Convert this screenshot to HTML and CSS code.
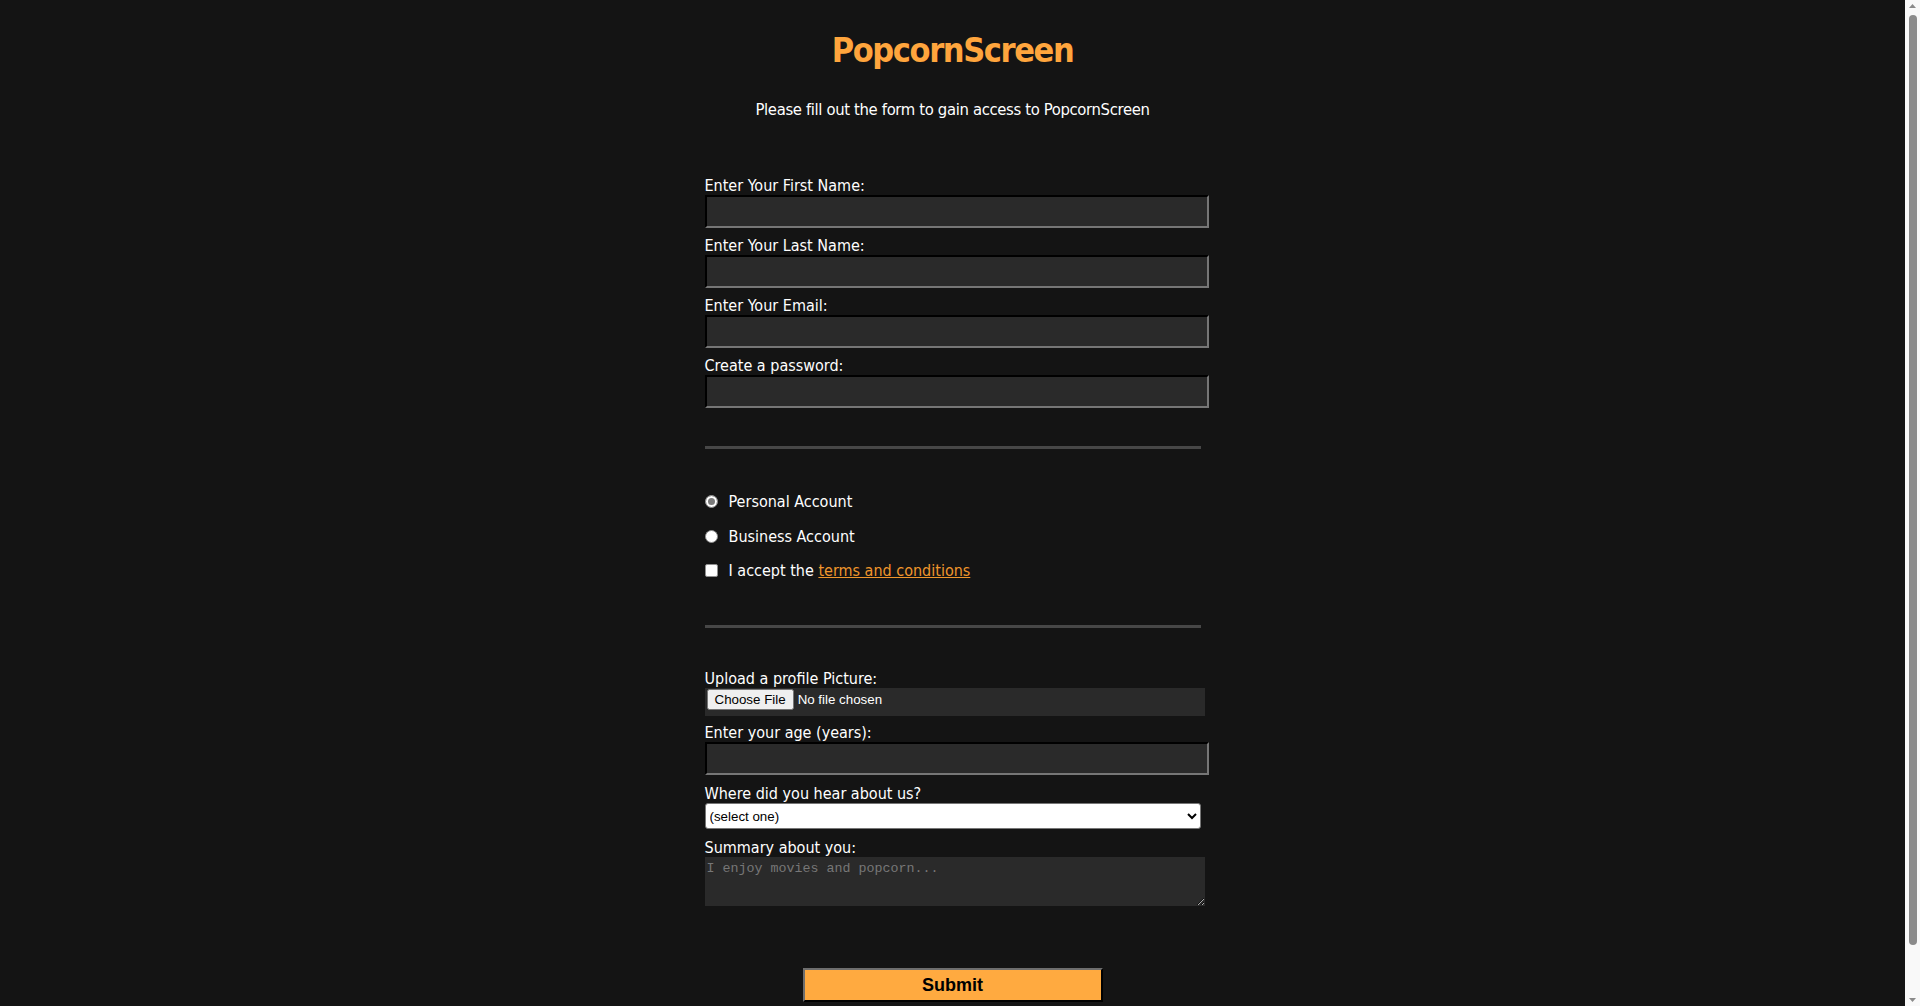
FILE: index.html
```html
<!DOCTYPE html>
<html lang="en">
<head>
<meta charset="utf-8">
<title>PopcornScreen</title>
<link rel="stylesheet" href="styles.css">
</head>
<body>
<header class="header">
  <h1 class="title">PopcornScreen</h1>
  <p class="subtitle">Please fill out the form to gain access to PopcornScreen</p>
</header>
<form class="form">
  <label class="label" for="first">Enter Your First Name:</label>
  <input class="text-input" id="first" type="text">
  <label class="label" for="last">Enter Your Last Name:</label>
  <input class="text-input" id="last" type="text">
  <label class="label" for="email">Enter Your Email:</label>
  <input class="text-input" id="email" type="email">
  <label class="label" for="pw">Create a password:</label>
  <input class="text-input" id="pw" type="password">

  <div class="rule rule-top"></div>

  <div class="choices">
    <label class="choice"><input class="radio radio-checked" type="radio" name="acct"><span>Personal Account</span></label>
    <label class="choice"><input class="radio" type="radio" name="acct"><span>Business Account</span></label>
    <label class="choice"><input class="check" type="checkbox"><span>I accept the <a class="link" href="#">terms and conditions</a></span></label>
  </div>

  <div class="rule rule-bottom"></div>

  <label class="label" for="pic">Upload a profile Picture:</label>
  <input class="file-input" id="pic" type="file">
  <label class="label" for="age">Enter your age (years):</label>
  <input class="text-input text-input-age" id="age" type="number">
  <label class="label" for="hear">Where did you hear about us?</label>
  <select class="select" id="hear">
    <option>(select one)</option>
    <option>Friend</option>
    <option>Advertisement</option>
  </select>
  <label class="label" for="summary">Summary about you:</label>
  <textarea class="summary" id="summary" rows="3" placeholder="I enjoy movies and popcorn..."></textarea>

  <div class="submit-row">
    <button class="submit" type="button">Submit</button>
  </div>
</form>

<div class="scrollbar" aria-hidden="true">
  <svg class="scroll-arrow" width="15" height="11" viewBox="0 0 15 11"><path d="M4 8 L7.5 4 L11 8 Z" fill="#8a8a8a"/></svg>
  <div class="scroll-thumb"></div>
  <svg class="scroll-arrow" width="15" height="11" viewBox="0 0 15 11"><path d="M4 3 L7.5 7 L11 3 Z" fill="#8a8a8a"/></svg>
</div>
</body>
</html>
```

FILE: styles.css
```css
html {
  background: #141414;
}

body {
  margin: 0;
  padding: 28px 15px 66px 0;
  background: #141414;
  color: #ffffff;
  font-family: "DejaVu Sans Condensed", "DejaVu Sans", Verdana, sans-serif;
}

.header {
  display: flex;
  flex-direction: column;
  align-items: center;
}

.title {
  margin: 0;
  font-size: 34px;
  line-height: 44px;
  letter-spacing: -1.4px;
  font-weight: bold;
  color: #ffa53d;
}

.subtitle {
  margin: 28.3px 0 0;
  font-size: 16.5px;
  line-height: 20px;
  letter-spacing: -0.35px;
}

.form {
  width: 496px;
  margin: 55.3px auto 0;
  display: flex;
  flex-direction: column;
  align-items: flex-start;
}

.label {
  display: block;
  font-size: 16px;
  line-height: 19px;
  color: #ffffff;
}

.text-input {
  box-sizing: border-box;
  width: 504px;
  height: 33px;
  margin: 0 0 8px;
  padding: 2px 4px;
  background: #2a2a2a;
  color: #ffffff;
  border: 2px solid;
  border-color: #000000 #767676 #767676 #000000;
  font-size: 16px;
}

.text-input-age {
  margin-bottom: 9px;
}

.rule {
  width: 496px;
  height: 3px;
  background: #474747;
}

.rule-top {
  margin-top: 30.4px;
}

.rule-bottom {
  margin-bottom: 40.5px;
}

.choices {
  display: flex;
  flex-direction: column;
  gap: 15.5px;
  padding: 43.2px 0 45.3px;
}

.choice {
  display: flex;
  align-items: center;
  gap: 10.5px;
  font-size: 16px;
  line-height: 19px;
}

.radio,
.check {
  appearance: none;
  -webkit-appearance: none;
  margin: 0 0 0 0.5px;
  width: 13px;
  height: 13px;
  background: #ffffff;
  border: 1px solid #8f8f8f;
  box-sizing: border-box;
}

.radio {
  border-radius: 50%;
}

.radio-checked {
  background: #7b7b7b;
  box-shadow: inset 0 0 0 2px #ffffff;
  border-color: #9a9a9a;
}

.check {
  border-radius: 2px;
}

.link {
  color: #f0962c;
  text-decoration: underline;
}

.file-input {
  box-sizing: border-box;
  width: 500px;
  height: 28px;
  margin: 0 0 7.4px;
  padding: 1px 2px 5px;
  background: #2a2a2a;
  color: #ffffff;
  font-family: "Liberation Sans", Arial, sans-serif;
  font-size: 13.33px;
}

.select {
  box-sizing: border-box;
  width: 496px;
  height: 26px;
  margin: 0 0 9px;
  font-family: "Liberation Sans", Arial, sans-serif;
  font-size: 13.33px;
  background: #ffffff;
  color: #000000;
  border: 1px solid #767676;
  border-radius: 3px;
}

.summary {
  box-sizing: border-box;
  width: 500px;
  height: 49px;
  margin: 0;
  padding: 4px 2px 2px;
  background: #2a2a2a;
  color: #ffffff;
  border: none;
  font-family: "Liberation Mono", "DejaVu Sans Mono", monospace;
  font-size: 13.33px;
}

.summary::placeholder {
  color: #777777;
}

.submit-row {
  align-self: stretch;
  display: flex;
  justify-content: center;
  padding-top: 61.65px;
}

.submit {
  box-sizing: border-box;
  width: 300px;
  height: 34px;
  background: #ffaa40;
  color: #000000;
  border: 2px solid;
  border-color: #6e6e6e #000000 #000000 #6e6e6e;
  font-family: "Liberation Sans", Arial, sans-serif;
  font-size: 18px;
  font-weight: bold;
}

.scrollbar {
  position: fixed;
  top: 0;
  right: 0;
  width: 15px;
  height: 100vh;
  background: #f9f9f9;
  display: flex;
  flex-direction: column;
  align-items: center;
}

.scroll-arrow {
  display: block;
  flex: none;
}

.scroll-thumb {
  flex: 1;
  width: 8px;
  margin: 4px 0 50px;
  border-radius: 4px;
  background: #8b8b8b;
}
```
